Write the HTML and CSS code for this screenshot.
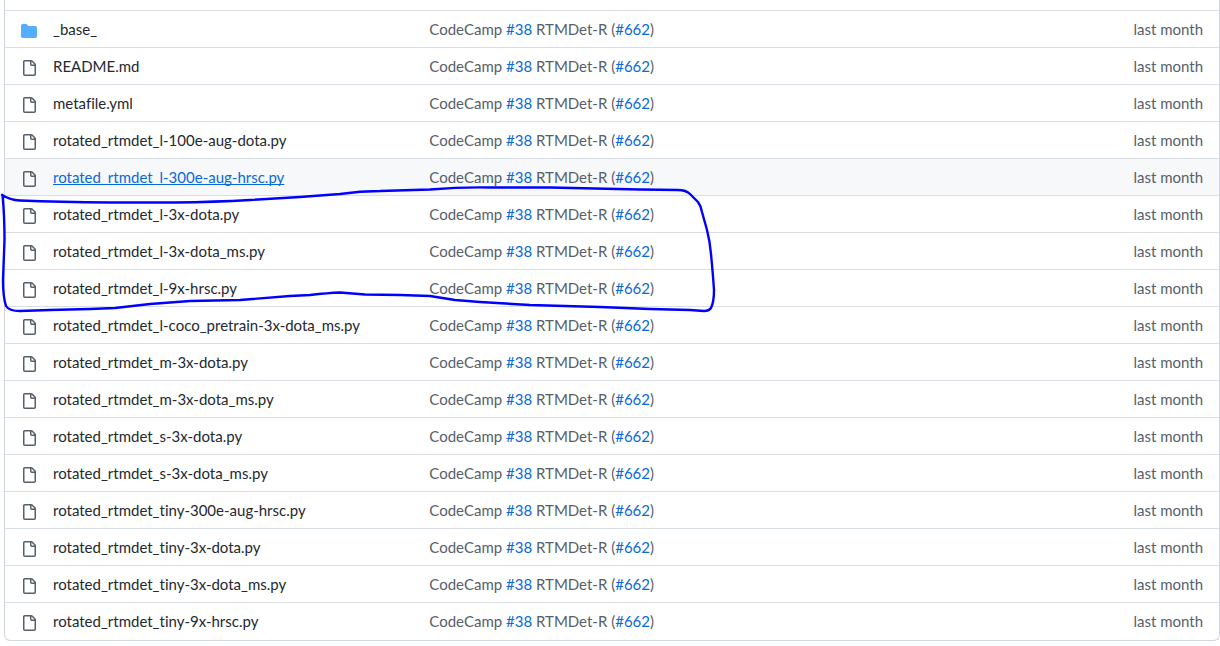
FILE: index.html
```html
<!DOCTYPE html>
<html lang="en">
<head>
    <meta charset="UTF-8">
    <meta name="viewport" content="width=device-width, initial-scale=1.0">
    <title>rotated_rtmdet</title>
    <link rel="stylesheet" href="styles.css">
</head>
<body>
    <svg class="symbols" aria-hidden="true">
        <symbol id="folder" viewBox="0 0 16 16">
            <path d="M1.75 1A1.75 1.75 0 0 0 0 2.75v10.5C0 14.216.784 15 1.75 15h12.5A1.75 1.75 0 0 0 16 13.25v-8.5A1.75 1.75 0 0 0 14.25 3H7.5a.25.25 0 0 1-.2-.1l-.9-1.2C6.07 1.26 5.55 1 5 1H1.75z"/>
        </symbol>
        <symbol id="file" viewBox="0 0 16 16">
            <path d="M2 1.75C2 .784 2.784 0 3.75 0h6.586c.464 0 .909.184 1.237.513l2.914 2.914c.329.328.513.773.513 1.237v9.586A1.75 1.75 0 0 1 13.25 16h-9.5A1.75 1.75 0 0 1 2 14.25V1.75zm1.75-.25a.25.25 0 0 0-.25.25v12.5c0 .138.112.25.25.25h9.5a.25.25 0 0 0 .25-.25V6h-2.75A1.75 1.75 0 0 1 9 4.25V1.5H3.75zm6.75.062V4.25c0 .138.112.25.25.25h2.688a.252.252 0 0 0-.011-.013l-2.914-2.914a.272.272 0 0 0-.013-.011z"/>
        </symbol>
    </svg>
    <div class="box">
        <table class="files">
            <colgroup>
                <col class="col-icon">
                <col class="col-name">
                <col>
                <col class="col-date">
            </colgroup>
            <tbody id="rows"></tbody>
        </table>
        <!-- pen mark around the 3x and 9x configs -->
        <svg class="pen" width="720" height="320" viewBox="0 0 720 320" aria-hidden="true">
            <path d="M2 195Q10 200 20 200.500Q60 202 110 202.500H175Q215 202 250 200L300 197L340 194Q360 191 380 191L430 189.500Q460 187 490 187.500H550L640 189.500L678 190Q686 190 690 194L698 202Q701 206 702 212L707 230Q710 242 711 254Q713 275 714 290Q714 302 711 308Q709 311 704 311L690 310L650 309L600 307L530 305L480 302L455 300L430 296L400 295L365 294.500L340 292.500Q328 293 310 295L290 296L240 300L190 301L150 304L115 308L90 309L50 310L20 311Q9 311 6 306Q3 297 3 280L4.500 240Q4.500 215 2.500 195"/>
        </svg>
    </div>
    <script>
        const rows = document.querySelector('#rows');
        const active = 'rotated_rtmdet_l-300e-aug-hrsc.py';
        const files = [
            '_base_',
            'README.md',
            'metafile.yml',
            'rotated_rtmdet_l-100e-aug-dota.py',
            'rotated_rtmdet_l-300e-aug-hrsc.py',
            'rotated_rtmdet_l-3x-dota.py',
            'rotated_rtmdet_l-3x-dota_ms.py',
            'rotated_rtmdet_l-9x-hrsc.py',
            'rotated_rtmdet_l-coco_pretrain-3x-dota_ms.py',
            'rotated_rtmdet_m-3x-dota.py',
            'rotated_rtmdet_m-3x-dota_ms.py',
            'rotated_rtmdet_s-3x-dota.py',
            'rotated_rtmdet_s-3x-dota_ms.py',
            'rotated_rtmdet_tiny-300e-aug-hrsc.py',
            'rotated_rtmdet_tiny-3x-dota.py',
            'rotated_rtmdet_tiny-3x-dota_ms.py',
            'rotated_rtmdet_tiny-9x-hrsc.py'
        ];

        files.forEach(name => {
            const icon = name === '_base_' ? 'folder' : 'file';
            const row = document.createElement('tr');
            if (name === active) {
                row.classList.add('active');
            }
            row.innerHTML = `
                <td class="icon-cell"><svg class="icon ${icon}"><use href="#${icon}"/></svg></td>
                <td><a class="name" href="#">${name}</a></td>
                <td class="commit">CodeCamp <a href="#">#38</a> RTMDet-R (<a href="#">#662</a>)</td>
                <td class="date">last month</td>`;
            rows.appendChild(row);
        });
    </script>
</body>
</html>
```
FILE: styles.css
```css
body{
    margin: 0;
    background-color: #fff;
    color: #24292f;
    font-family: Lato, "Open Sans", sans-serif;
    font-size: 15px;
    font-variant-ligatures: none;
    line-height: 20px;
}
a{
    color: #0969da;
    text-decoration: none;
}
.symbols{
    display: none;
}
.box{
    position: relative;
    margin: 0 0 5px 4px;
    padding: 10px 0 1px;
    border: 1px solid #d0d7de;
    border-top: 0;
    border-radius: 0 0 6px 6px;
}
.files{
    width: 100%;
    table-layout: fixed;
    border-spacing: 0;
}
.col-icon{
    width: 48px;
}
.col-name{
    width: 31%;
}
.col-date{
    width: 120px;
}
td{
    height: 20px;
    padding: 8px 0;
    border-top: 1px solid #d8dee4;
    white-space: nowrap;
}
.icon-cell{
    padding: 10px 0 6px 16px;
}
.icon{
    display: block;
    width: 16px;
    height: 16px;
    fill: #57606a;
}
.folder{
    fill: #54aeff;
}
.name{
    color: #24292f;
}
.active{
    background-color: #f6f8fa;
}
.active .name, .name:hover{
    color: #0969da;
    text-decoration: underline;
    text-decoration-skip-ink: none;
}
.commit, .date{
    color: #57606a;
}
.date{
    padding-right: 16px;
    text-align: right;
}
.pen{
    position: absolute;
    top: 0;
    left: -5px;
    pointer-events: none;
}
.pen path{
    fill: none;
    stroke: #0000ff;
    stroke-width: 2.4;
    stroke-linecap: round;
    stroke-linejoin: round;
}
```
